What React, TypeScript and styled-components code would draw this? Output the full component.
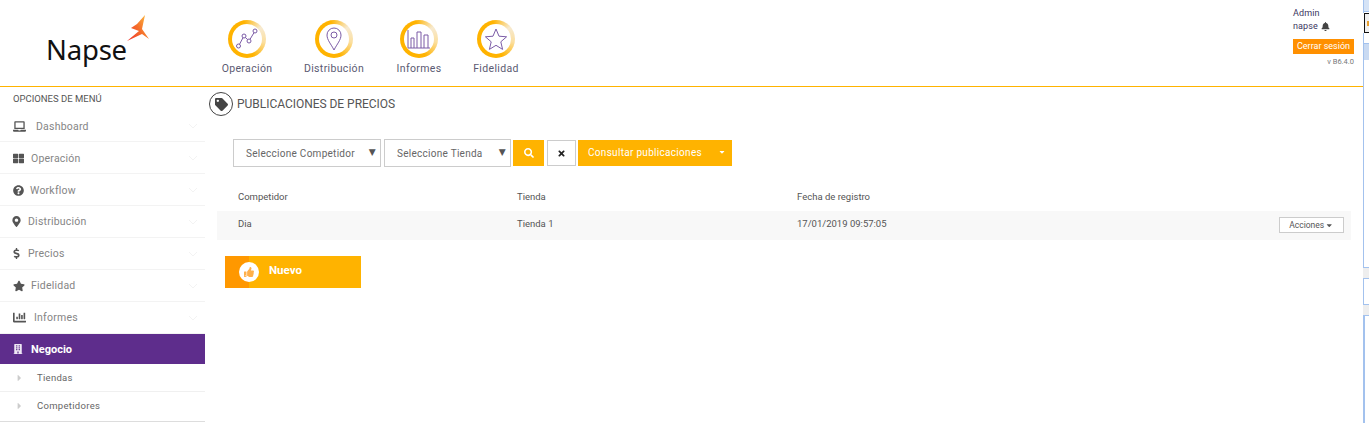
import React from "react";
import styled, { createGlobalStyle } from "styled-components";
import {
  FaBell, FaBuilding, FaCaretDown, FaCaretRight, FaChartBar, FaDollarSign, FaLaptop,
  FaMapMarkerAlt, FaQuestionCircle, FaSearch, FaStar, FaTag, FaThLarge, FaThumbsUp, FaTimes,
} from "react-icons/fa";

const Global = createGlobalStyle`
  html, body { margin: 0; padding: 0; background: #fff; overflow: hidden; }
  body { font-family: Roboto, "Liberation Sans", sans-serif; color: #555; }
  * { box-sizing: border-box; }
`;

const Page = styled.div`
  width: 1369px; height: 423px; display: flex; overflow: hidden;
`;
const Main = styled.div`
  width: 1363px; display: flex; flex-direction: column;
`;
const Header = styled.header`
  height: 87px; flex: none; display: flex; border-bottom: 1px solid #ffb300;
`;
const LogoBox = styled.div`
  width: 205px; flex: none; padding: 14px 0 0 44px;
`;
const LogoRow = styled.div`
  position: relative; width: 110px; height: 60px;
`;
const LogoText = styled.span`
  position: absolute; left: 2px; top: 16px;
  font: 400 27.5px/40px "Noto Sans", sans-serif; color: #111; letter-spacing: -0.2px;
`;
const LogoMark = styled.svg`
  position: absolute; left: 76px; top: -4px; width: 32px; height: 34px;
`;
const Nav = styled.nav`
  display: flex; padding: 20px 0 0 17px; flex: 1;
`;
const NavItem = styled.div<{ $w: number; $ml: number }>`
  width: ${p => p.$w}px; margin-left: ${p => p.$ml}px; display: flex; flex-direction: column; align-items: center; gap: 4px;
`;
const Ring = styled.div`
  width: 38px; height: 38px; border-radius: 50%; padding: 4px;
  background: conic-gradient(from 50deg, #f7ead0 0deg, #fbdfa0 50deg, #ffb300 110deg, #ffb300 300deg, #f7ead0 360deg);
`;
const RingInner = styled.div`
  width: 100%; height: 100%; border-radius: 50%; background: #fff;
  display: flex; align-items: center; justify-content: center;
`;
const NavIcon = styled.svg`
  width: 24px; height: 24px; fill: none; stroke: #7b5ba6; stroke-width: 1;
`;
const NavLabel = styled.span`
  font-size: 10.5px; line-height: 14px; color: #5b5a72; letter-spacing: 0.35px; white-space: nowrap;
`;
const UserBox = styled.div`
  width: 70px; flex: none; padding: 7px 0 0 0; display: flex; flex-direction: column;
`;
const UserLine = styled.span`
  font-size: 9px; line-height: 13px; color: #3a3560; display: flex; align-items: center; gap: 3px;
  letter-spacing: 0.1px;
  svg { color: #444; }
`;
const Logout = styled.button`
  width: 61px; height: 15px; margin-top: 6px; border: 0; padding: 0; background: #ff9000; color: #fff;
  font: 400 9px/15px Roboto, sans-serif; text-align: center;
`;
const Version = styled.span`
  width: 61px; margin-top: 1px; text-align: right; font-size: 7.5px; line-height: 13px; color: #777;
`;
const Body = styled.div`
  flex: 1; display: flex; min-height: 0;
`;
const Side = styled.aside`
  width: 205px; flex: none; display: flex; flex-direction: column;
`;
const SideTitle = styled.div`
  height: 23px; padding: 5px 0 0 13px; font-size: 9.5px; line-height: 13px; color: #555;
`;
const SideRow = styled.div<{ $gap: number; $nudge: number }>`
  height: 32px; flex: none; padding: ${p => p.$nudge}px 0 0 13px; display: flex; align-items: center; gap: ${p => p.$gap}px;
  border-bottom: 1px solid #f3f3f3; font-size: 10.5px; color: #858585; letter-spacing: 0.22px; position: relative;
`;
const IconSlot = styled.span<{ $w: number }>`
  width: ${p => p.$w}px; flex: none; display: flex; justify-content: center; color: #555;
  svg { flex: none; }
`;
const Chevron = styled.svg`
  position: absolute; right: 8px; top: 14px; width: 8px; height: 5px; fill: none; stroke: #f3f3f3; stroke-width: 1;
`;
const ActiveRow = styled.div`
  height: 30px; flex: none; background: #5e2d8c; padding-left: 13px; display: flex; align-items: center; gap: 8px;
  color: #fff; font-size: 11px; font-weight: 700;
  svg { color: #efe8f5; }
`;
const SubRow = styled.div<{ $h: number; $line: string; $pb: number }>`
  height: ${p => p.$h}px; flex: none; padding: 0 0 ${p => p.$pb}px 16px; display: flex; align-items: center; gap: 14px;
  border-bottom: 1px solid ${p => p.$line}; font-size: 9.5px; color: #666; letter-spacing: 0.3px;
  svg { color: #ccc; font-size: 10px; flex: none; width: 7px; }
`;
const Content = styled.main`
  flex: 1; display: flex; flex-direction: column; padding-left: 3px; min-width: 0;
`;
const TitleRow = styled.div`
  height: 52px; flex: none; display: flex; padding: 5px 0 0 1px; gap: 4px;
`;
const TitleIcon = styled.div`
  width: 24px; height: 24px; border: 1px solid #444; border-radius: 50%; background: #fff;
  display: flex; align-items: center; justify-content: center; color: #444; font-size: 13px;
`;
const TitleText = styled.h1`
  margin: 0; font-size: 12px; line-height: 24px; font-weight: 400; color: #555; letter-spacing: -0.03px;
`;
const Filters = styled.div`
  height: 28px; flex: none; margin-left: 25px; display: flex; align-items: center;
`;
const Select = styled.div<{ $w: number; $mr: number }>`
  width: ${p => p.$w}px; height: 28px; margin-right: ${p => p.$mr}px; flex: none; border: 1px solid #ccc;
  display: flex; align-items: center; justify-content: space-between; padding: 0 4px 0 12px;
  font-size: 10px; color: #666; letter-spacing: 0.27px;
`;
const SelectArrow = styled.span`
  font: 9px/1 "DejaVu Sans", sans-serif; color: #555; margin-bottom: 2px;
`;
const IconBtn = styled.div`
  width: 31px; height: 26px; flex: none; background: #ffb300; color: #fff; font-size: 10px;
  display: flex; align-items: center; justify-content: center;
`;
const ClearBtn = styled.div`
  width: 29px; height: 26px; flex: none; margin: 0 2px 0 3px; border: 1px solid #ccc; color: #222; font-size: 9px;
  display: flex; align-items: center; justify-content: center;
`;
const SplitBtn = styled.div`
  width: 154px; height: 26px; flex: none; background: #ffb300; color: #fff; font-size: 10px; letter-spacing: 0.3px;
  display: flex; align-items: center; justify-content: space-between; padding: 0 6px 2px 10px;
  svg { font-size: 8px; }
`;
const Table = styled.div`
  margin: 14px 12px 0 9px; display: flex; flex-direction: column;
`;
const Row = styled.div<{ $h: number; $bg?: string; $pb: number }>`
  height: ${p => p.$h}px; background: ${p => p.$bg ?? "transparent"}; display: grid;
  grid-template-columns: 279px 280px 1fr auto; align-items: center; padding: 0 7px ${p => p.$pb}px 21px;
  font-size: 9.5px; color: #555;
`;
const ActionsBtn = styled.div`
  width: 65px; height: 16px; border: 1px solid #ccc; background: #fff; display: flex; align-items: center;
  justify-content: center; gap: 1px; font-size: 8.5px; color: #555; margin-top: 4px;
`;
const NewBtn = styled.div`
  width: 136px; height: 32px; margin: 16px 0 0 17px; flex: none; background: #ffb300; display: flex; position: relative;
  align-items: center;
`;
const NewStripe = styled.div`
  width: 24px; height: 100%; background: #ff9800;
`;
const NewCircle = styled.div`
  position: absolute; left: 14px; top: 6px; width: 20px; height: 20px; border-radius: 50%; background: #fff;
  color: #ffb04a; font-size: 10px; display: flex; align-items: center; justify-content: center;
`;
const NewLabel = styled.span`
  margin-left: 20px; margin-bottom: 4px; color: #fff; font-size: 11.5px; font-weight: 700;
`;
const Rail = styled.div`
  width: 6px; flex: none; display: flex; flex-direction: column; background: #fff;
`;
const RailBlock = styled.div<{ $h?: number; $bg: string; $side?: number }>`
  ${p => (p.$h ? `height: ${p.$h}px; flex: none;` : "flex: 1;")}
  background: ${p => p.$bg};
  border-left: ${p => p.$side ?? 1}px solid #a3c2ee;
`;
const RailLine = styled.div`
  height: 1px; flex: none; background: #a3c2ee;
`;
const RailBox = styled.div`
  height: 20px; flex: none; margin-left: 1px; background: #f0f0f0; border: 1px solid #111; border-right: 0;
  display: flex; align-items: center; padding-left: 2px;
`;
const RailMark = styled.span`
  width: 2px; height: 5px; background: #e8a030;
`;

const chev = <Chevron viewBox="0 0 8 5"><path d="M0 0l4 4 4-4" /></Chevron>;

const menu = [
  { label: "Dashboard", Icon: FaLaptop, slot: 13, size: 13, gap: 10, nudge: 2 },
  { label: "Operación", Icon: FaThLarge, slot: 11, size: 11, gap: 7, nudge: 2 },
  { label: "Workflow", Icon: FaQuestionCircle, slot: 11, size: 11, gap: 6, nudge: 2 },
  { label: "Distribución", Icon: FaMapMarkerAlt, slot: 7, size: 11, gap: 8, nudge: 0 },
  { label: "Precios", Icon: FaDollarSign, slot: 7, size: 11, gap: 8, nudge: 0 },
  { label: "Fidelidad", Icon: FaStar, slot: 12, size: 12, gap: 6, nudge: 0 },
  { label: "Informes", Icon: FaChartBar, slot: 13, size: 13, gap: 8, nudge: 0 },
];

export default function App() {
  return (
    <Page>
      <Global />
      <Main>
        <Header>
          <LogoBox>
            <LogoRow>
              <LogoText>Napse</LogoText>
              <LogoMark viewBox="0 0 32 34">
                <defs>
                  <linearGradient id="lg" x1="0" y1="1" x2="1" y2="0.3">
                    <stop offset="0" stopColor="#ee2f2b" />
                    <stop offset="0.6" stopColor="#f5702b" />
                    <stop offset="1" stopColor="#fbb03b" />
                  </linearGradient>
                </defs>
                <path d="M25 5 L17 14 L11 18 L19 21 L7 31 L22 24 L29 29 L22 19 Z" fill="url(#lg)" />
              </LogoMark>
            </LogoRow>
          </LogoBox>
          <Nav>
            <NavItem $w={50} $ml={0}>
              <Ring><RingInner>
                <NavIcon viewBox="0 0 24 24">
                  <circle cx="3.5" cy="19" r="2" /><circle cx="9" cy="9" r="2" /><circle cx="14" cy="14" r="2" /><circle cx="20" cy="4" r="2" />
                  <path d="M4.500 17.300L8 10.700M10.300 10.500L12.700 12.600M15 12.300L19 5.700" />
                </NavIcon>
              </RingInner></Ring>
              <NavLabel>Operación</NavLabel>
            </NavItem>
            <NavItem $w={60} $ml={32}>
              <Ring><RingInner>
                <NavIcon viewBox="0 0 24 24">
                  <path d="M12 23C9 17 5 13 5 8a7 7 0 0 1 14 0c0 5-4 9-7 15z" /><circle cx="12" cy="8" r="3" />
                </NavIcon>
              </RingInner></Ring>
              <NavLabel>Distribución</NavLabel>
            </NavItem>
            <NavItem $w={50} $ml={30}>
              <Ring><RingInner>
                <NavIcon viewBox="0 0 24 24">
                  <path d="M1 3v18h22M4 21v-10h3v10M10 21V5h4v16M17 21V8h4v13" />
                </NavIcon>
              </RingInner></Ring>
              <NavLabel>Informes</NavLabel>
            </NavItem>
            <NavItem $w={50} $ml={27}>
              <Ring><RingInner>
                <NavIcon viewBox="0 0 24 24">
                  <path d="M12 2l3 7.200 7.600.6-5.800 5 1.800 7.600L12 18.300l-6.600 4.100 1.800-7.600-5.800-5L9 9.200z" />
                </NavIcon>
              </RingInner></Ring>
              <NavLabel>Fidelidad</NavLabel>
            </NavItem>
          </Nav>
          <UserBox>
            <UserLine>Admin</UserLine>
            <UserLine>napse <FaBell size={9} /></UserLine>
            <Logout>Cerrar sesión</Logout>
            <Version>v B6.4.0</Version>
          </UserBox>
        </Header>
        <Body>
          <Side>
            <SideTitle>OPCIONES DE MENÚ</SideTitle>
            {menu.map(({ label, Icon, slot, size, gap, nudge }) => (
              <SideRow key={label} $gap={gap} $nudge={nudge}>
                <IconSlot $w={slot}><Icon size={size} /></IconSlot>
                {label}
                {chev}
              </SideRow>
            ))}
            <ActiveRow><FaBuilding size={10} />Negocio</ActiveRow>
            <SubRow $h={28} $line="#f0f0f0" $pb={0}><FaCaretRight />Tiendas</SubRow>
            <SubRow $h={30} $line="#ddd" $pb={2}><FaCaretRight />Competidores</SubRow>
          </Side>
          <Content>
            <TitleRow>
              <TitleIcon><FaTag /></TitleIcon>
              <TitleText>PUBLICACIONES DE PRECIOS</TitleText>
            </TitleRow>
            <Filters>
              <Select $w={148} $mr={3}>Seleccione Competidor<SelectArrow>▼</SelectArrow></Select>
              <Select $w={127} $mr={2}>Seleccione Tienda<SelectArrow>▼</SelectArrow></Select>
              <IconBtn><FaSearch /></IconBtn>
              <ClearBtn><FaTimes /></ClearBtn>
              <SplitBtn>Consultar publicaciones<FaCaretDown /></SplitBtn>
            </Filters>
            <Table>
              <Row $h={30} $pb={0}>
                <span>Competidor</span><span>Tienda</span><span>Fecha de registro</span><span />
              </Row>
              <Row $h={29} $bg="#f8f8f8" $pb={5}>
                <span>Dia</span><span>Tienda 1</span><span>17/01/2019 09:57:05</span>
                <ActionsBtn>Acciones<FaCaretDown /></ActionsBtn>
              </Row>
            </Table>
            <NewBtn>
              <NewStripe />
              <NewCircle><FaThumbsUp /></NewCircle>
              <NewLabel>Nuevo</NewLabel>
            </NewBtn>
          </Content>
        </Body>
      </Main>
      <Rail>
        <RailBlock $h={11} $bg="#d5e3f6" />
        <RailLine />
        <RailBlock $h={1} $bg="#fff" />
        <RailBox><RailMark /></RailBox>
        <RailBlock $h={10} $bg="#fff" />
        <RailLine />
        <RailBlock $h={16} $bg="#c9daf2" />
        <RailBlock $h={207} $bg="#fff" />
        <RailLine />
        <RailBlock $h={10} $bg="#eeeeee" $side={0} />
        <RailLine />
        <RailBlock $h={25} $bg="#fff" />
        <RailLine />
        <RailBlock $h={10} $bg="#eeeeee" $side={0} />
        <RailLine />
        <RailBlock $bg="#fff" $side={2} />
      </Rail>
    </Page>
  );
}
